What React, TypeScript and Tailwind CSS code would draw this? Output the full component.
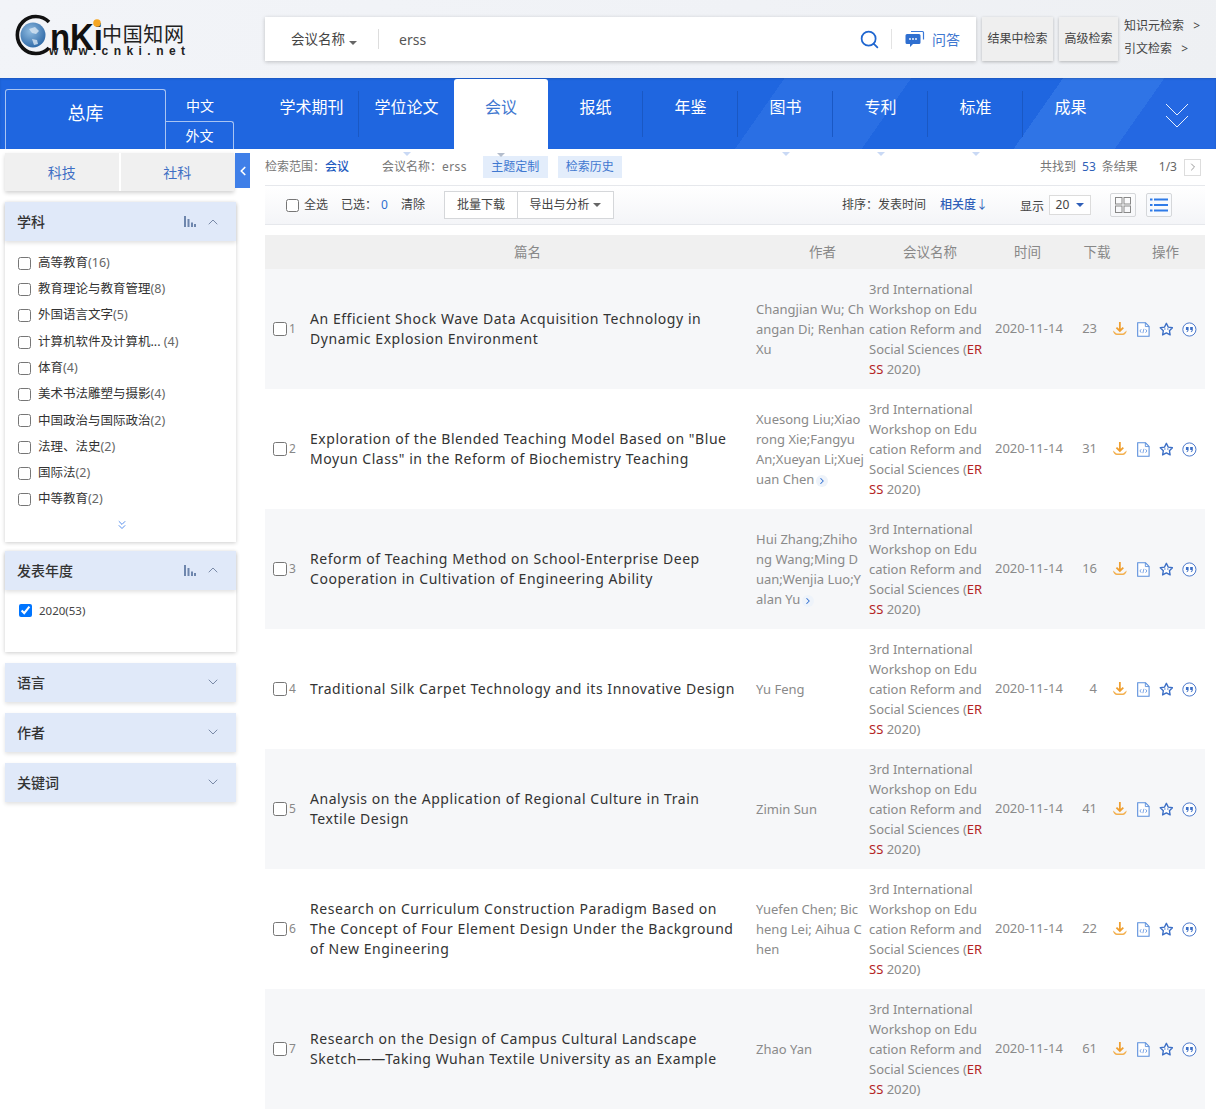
import { ChevronDown, ChevronLeft, ChevronRight, ChevronUp, ChevronsDown, Search } from "lucide-react";

type Row = {
  title: string;
  author: string;
  more?: boolean;
  downloads: number;
};

const rows: Row[] = [
  { title: "An Efficient Shock Wave Data Acquisition Technology in Dynamic Explosion Environment", author: "Changjian Wu; Changan Di; Renhan Xu", downloads: 23 },
  { title: 'Exploration of the Blended Teaching Model Based on "Blue Moyun Class" in the Reform of Biochemistry Teaching', author: "Xuesong Liu;Xiaorong Xie;Fangyu An;Xueyan Li;Xuejuan Chen", more: true, downloads: 31 },
  { title: "Reform of Teaching Method on School-Enterprise Deep Cooperation in Cultivation of Engineering Ability", author: "Hui Zhang;Zhihong Wang;Ming Duan;Wenjia Luo;Yalan Yu", more: true, downloads: 16 },
  { title: "Traditional Silk Carpet Technology and its Innovative Design", author: "Yu Feng", downloads: 4 },
  { title: "Analysis on the Application of Regional Culture in Train Textile Design", author: "Zimin Sun", downloads: 41 },
  { title: "Research on Curriculum Construction Paradigm Based on The Concept of Four Element Design Under the Background of New Engineering", author: "Yuefen Chen; Bicheng Lei; Aihua Chen", downloads: 22 },
  { title: "Research on the Design of Campus Cultural Landscape Sketch——Taking Wuhan Textile University as an Example", author: "Zhao Yan", downloads: 61 },
];

const subjects = [
  ["高等教育", "(16)"],
  ["教育理论与教育管理", "(8)"],
  ["外国语言文字", "(5)"],
  ["计算机软件及计算机...", " (4)"],
  ["体育", "(4)"],
  ["美术书法雕塑与摄影", "(4)"],
  ["中国政治与国际政治", "(2)"],
  ["法理、法史", "(2)"],
  ["国际法", "(2)"],
  ["中等教育", "(2)"],
];

const navItems = [
  { name: "学术期刊", caret: false },
  { name: "学位论文", caret: true },
  { name: "会议", caret: true, active: true },
  { name: "报纸", caret: false },
  { name: "年鉴", caret: false },
  { name: "图书", caret: true },
  { name: "专利", caret: true },
  { name: "标准", caret: true },
  { name: "成果", caret: false },
];

function Logo() {
  return (
    <svg width="180" height="50" viewBox="0 0 180 50" className="shrink-0">
      <defs>
        <radialGradient id="globe" cx="0.4" cy="0.35" r="0.8">
          <stop offset="0" stopColor="#8fbbe0" />
          <stop offset="1" stopColor="#1f5c9e" />
        </radialGradient>
      </defs>
      <circle cx="25" cy="22" r="12.5" fill="url(#globe)" />
      <path d="M21 16l6-2 4 4-3 3-4-1zM24 26l5 1 1 4-4 1z" fill="#d8e6f2" opacity="0.8" />
      <path d="M41 9A18.5 18.5 0 1 0 41 35" fill="none" stroke="#111" strokeWidth="3.6" />
      <text x="42" y="37" fontFamily="'Liberation Sans',sans-serif" fontWeight="700" fontSize="36" fill="#111" textLength="53" lengthAdjust="spacingAndGlyphs">nKi</text>
      <circle cx="89" cy="10" r="3.8" fill="#f5a623" />
      <text x="94" y="29" fontFamily="'Noto Sans CJK SC',sans-serif" fontSize="20" fill="#222" textLength="82" lengthAdjust="spacing">中国知网</text>
      <text x="41" y="42" fontFamily="'Liberation Sans',sans-serif" fontWeight="700" fontSize="12" fill="#222" textLength="136" lengthAdjust="spacing">www.cnki.net</text>
    </svg>
  );
}

function ChatIcon() {
  return (
    <svg width="20" height="18" viewBox="0 0 20 18">
      <path d="M6 1.5h11.5a1 1 0 0 1 1 1v7" fill="none" stroke="#3a78d8" strokeWidth="1.2" />
      <path d="M2 4h12a1.500 1.500 0 0 1 1.500 1.500v7a1.500 1.500 0 0 1-1.500 1.500H8l-3 3v-3H2a1.500 1.500 0 0 1-1.500-1.500v-7A1.500 1.500 0 0 1 2 4z" fill="#2f6fd0" />
      <circle cx="5" cy="9" r="0.9" fill="#fff" />
      <circle cx="8" cy="9" r="0.9" fill="#fff" />
      <circle cx="11" cy="9" r="0.9" fill="#fff" />
    </svg>
  );
}

function BarsIcon() {
  return (
    <svg width="12" height="11" viewBox="0 0 12 11" className="shrink-0">
      <path d="M0 0h2v11H0zM3.500 3h2v8h-2zM7 6.500h2V11H7zM10 8h2v3h-2z" fill="#6e86ad" />
    </svg>
  );
}

function DownloadIcon() {
  return (
    <svg width="16" height="16" viewBox="0 0 16 16">
      <path d="M8 1v9M4.500 6.500L8 10l3.500-3.500" fill="none" stroke="#ef9f2f" strokeWidth="1.800" />
      <path d="M1 9.500c.5 3 2 4.500 4 4.500h6c2 0 3.500-1.500 4-4.500l-3 2.500c-.5.500-1 .5-1.500.5h-5c-.5 0-1 0-1.500-.5z" fill="#f3b04f" />
    </svg>
  );
}

function DocIcon() {
  return (
    <svg width="13" height="15" viewBox="0 0 13 15">
      <path d="M.7.7h8l3.600 3.600v10H.7z" fill="#fff" stroke="#5a8fdc" strokeWidth="1.100" />
      <path d="M8.500.7v3.800h3.800" fill="none" stroke="#5a8fdc" strokeWidth="0.900" />
      <path d="M4.300 7.200L3 9l1.300 1.800M8.700 7.200L10 9l-1.300 1.800M7 6.800L6 11.200" fill="none" stroke="#5a8fdc" strokeWidth="0.800" />
    </svg>
  );
}

function StarIcon() {
  return (
    <svg width="15" height="15" viewBox="0 0 15 15">
      <path d="M7.500 1.200l1.900 3.900 4.300.6-3.100 3 .7 4.300-3.800-2-3.800 2 .7-4.300-3.100-3 4.300-.6z" fill="#fff" stroke="#3c6fc6" strokeWidth="1.400" strokeLinejoin="round" />
      <circle cx="6" cy="7" r="0.700" fill="#3c6fc6" />
      <circle cx="9" cy="7" r="0.700" fill="#3c6fc6" />
    </svg>
  );
}

function QuoteIcon() {
  return (
    <svg width="15" height="15" viewBox="0 0 15 15">
      <circle cx="7.500" cy="7.500" r="6.700" fill="#fff" stroke="#4a78cc" strokeWidth="1" />
      <path d="M4 5h2.700v2.500c0 1.300-.7 2.300-1.800 2.700l-.3-.7c.6-.3 1-.8 1-1.500H4zM8.300 5H11v2.500c0 1.300-.7 2.300-1.800 2.700l-.3-.7c.6-.3 1-.8 1-1.500H8.300z" fill="#3c6fc6" />
    </svg>
  );
}

function Caret({ color = "border-t-[#666]" }: { color?: string }) {
  return <span className={`inline-block h-0 w-0 border-x-[4px] border-t-[4px] border-x-transparent ${color}`} />;
}

function FilterHead({ name, open, bars }: { name: string; open?: boolean; bars?: boolean }) {
  return (
    <div className="flex h-[39px] items-center bg-[#e0e9f9] pr-[15px] pl-3 shadow-[0_2px_4px_rgba(0,0,0,0.12)]">
      <span className="flex-1 text-[14px] font-medium text-[#333]">{name}</span>
      {bars && <BarsIcon />}
      {open ? (
        <ChevronUp size={16} strokeWidth={1.500} className="ml-[9px] text-[#7a8aa8]" />
      ) : (
        <ChevronDown size={16} strokeWidth={1.500} className="ml-[9px] text-[#7a8aa8]" />
      )}
    </div>
  );
}

function Sidebar() {
  return (
    <aside className="relative ml-[5px] w-[231px] shrink-0 pt-1">
      <div className="flex h-[38px] w-[229px] gap-[2px] shadow-[0_2px_4px_rgba(0,0,0,0.18)]">
        <div className="flex flex-1 items-center justify-center bg-[#f0f0f0] text-[14px] text-[#3f6fc4]">科技</div>
        <div className="flex flex-1 items-center justify-center bg-[#f0f0f0] text-[14px] text-[#3f6fc4]">社科</div>
      </div>
      <div className="absolute top-1 left-[230px] flex h-[35px] w-[15px] items-center justify-center bg-[#3f7fe8] text-white">
        <ChevronLeft size={14} strokeWidth={3} />
      </div>

      <div className="mt-[11px] bg-white shadow-[0_1px_4px_rgba(0,0,0,0.2)]">
        <FilterHead name="学科" open bars />
        <div className="pt-[9px]">
          {subjects.map(([name, count]) => (
            <label key={name} className="flex h-[26.300px] items-center pl-[13px] text-[12.500px] text-[#333]">
              <input type="checkbox" className="m-0 h-[13px] w-[13px]" />
              <span className="ml-[7px] whitespace-pre">
                {name}
                <span className="text-[#666]">{count}</span>
              </span>
            </label>
          ))}
        </div>
        <div className="flex h-[29px] items-start justify-center pt-[5px] pl-[2px] text-[#3f7fe8]">
          <ChevronsDown size={14} strokeWidth={1.500} />
        </div>
      </div>

      <div className="mt-[9px] bg-white shadow-[0_1px_4px_rgba(0,0,0,0.2)]">
        <FilterHead name="发表年度" open bars />
        <div className="flex h-[62px] items-start pt-[14px] pl-[14px] text-[11.500px] text-[#444]">
          <input type="checkbox" defaultChecked className="m-0 h-[13px] w-[13px]" />
          <span className="ml-[7px] leading-[13px]">2020(53)</span>
        </div>
      </div>

      <div className="mt-[11px] flex flex-col gap-[11px]">
        <FilterHead name="语言" />
        <FilterHead name="作者" />
        <FilterHead name="关键词" />
      </div>
    </aside>
  );
}

function ResultRow({ row, index }: { row: Row; index: number }) {
  return (
    <div className={`flex h-[120px] items-center ${index % 2 === 0 ? "bg-[#f6f7f9]" : "bg-white"}`}>
      <div className="flex w-[45px] shrink-0 items-center pl-2 text-[12px] text-[#888]">
        <input type="checkbox" className="m-0 h-[14px] w-[14px]" />
        <span className="ml-[2px]">{index + 1}</span>
      </div>
      <div className="w-[446px] shrink-0 pr-[10px] text-[14px] leading-[20px] tracking-[0.55px] text-[#333]">{row.title}</div>
      <div className="w-[113px] shrink-0 pr-1 text-[13px] leading-[20px] break-all text-[#8a8a8a]">
        {row.author}
        {row.more && (
          <span className="ml-[2px] inline-flex h-[12px] w-[12px] items-center justify-center rounded-full bg-[#eef3fa] align-middle text-[#2f6fd0]">
            <ChevronRight size={10} strokeWidth={2.500} />
          </span>
        )}
      </div>
      <div className="w-[126px] shrink-0 pr-[12px] text-[13px] leading-[20px] break-all text-[#8a8a8a]">
        3rd International Workshop on Education Reform and Social Sciences (<span className="text-[#b52525]">ERSS</span> 2020)
      </div>
      <div className="w-[85px] shrink-0 text-[13px] text-[#8a8a8a]">2020-11-14</div>
      <div className="w-[17px] shrink-0 text-right text-[13px] text-[#8a8a8a]">{row.downloads}</div>
      <div className="ml-[15px] flex w-[85px] shrink-0 items-center gap-[9px]">
        <DownloadIcon />
        <DocIcon />
        <StarIcon />
        <QuoteIcon />
      </div>
    </div>
  );
}

export default function App() {
  return (
    <div className="min-h-[1116px] w-[1216px] overflow-hidden bg-white font-['Noto_Sans','Noto_Sans_CJK_SC',sans-serif] text-[#333]">
      <header className="flex h-[78px] items-start bg-[linear-gradient(115deg,#f2f4f8_0%,#f0f2f6_60%,#eef0f3_100%)] pt-[17px]">
        <div className="ml-[8px] -mt-[4px] w-[257px] shrink-0">
          <Logo />
        </div>
        <div className="flex h-[44px] w-[711px] items-center bg-white shadow-[0_1px_4px_rgba(0,0,0,0.22)]">
          <span className="ml-[26px] text-[13.500px] text-[#444]">会议名称</span>
          <span className="ml-[4px]"><Caret /></span>
          <span className="ml-[21px] h-[20px] w-px bg-[#ddd]" />
          <span className="ml-[20px] flex-1 text-[14px] text-[#555]">erss</span>
          <Search size={21} strokeWidth={2} className="text-[#1f66d0]" />
          <span className="mr-[13px] ml-[11px] h-[20px] w-px bg-[#e3e3e3]" />
          <ChatIcon />
          <span className="mr-[16px] ml-[7px] text-[14px] text-[#3f78d0]">问答</span>
        </div>
        <div className="ml-[6px] flex h-[44px] w-[71px] items-center justify-center bg-[#efefef] text-[12px] text-[#444] shadow-[0_1px_3px_rgba(0,0,0,0.25)]">结果中检索</div>
        <div className="ml-[6px] flex h-[44px] w-[59px] items-center justify-center bg-[#efefef] text-[12px] text-[#444] shadow-[0_1px_3px_rgba(0,0,0,0.25)]">高级检索</div>
        <div className="ml-[6px] flex flex-col gap-[5px] text-[12px] leading-[18px] text-[#444]">
          <span className="whitespace-pre">知识元检索   &gt;</span>
          <span className="whitespace-pre">引文检索   &gt;</span>
        </div>
      </header>

      <nav className="flex h-[71px] bg-[linear-gradient(125deg,#1f66e0_0%,#1f66e0_62%,#2a6fe4_62%,#2a6fe4_72%,#1f66e0_72%,#1f66e0_84%,#2f74e6_84%,#2f74e6_92%,#2468e2_92%)] shadow-[inset_0_1px_2px_rgba(0,0,0,0.15)]">
        <div className="ml-[5px] flex w-[259px] shrink-0 items-end">
          <div className="flex h-[60px] w-[161px] items-start justify-center rounded-t-[3px] border-x border-t border-[#a9c4f2] pt-[10px] text-[18px] text-white">
            总库
          </div>
          <div className="flex h-[60px] w-[68px] flex-col text-[14px] text-white">
            <div className="flex h-[32px] items-center justify-center">中文</div>
            <div className="flex h-[28px] items-center justify-center rounded-tr-[3px] border-t border-r border-[#a9c4f2]">外文</div>
          </div>
        </div>
        {navItems.map((item) => (
          <div
            key={item.name}
            className={
              item.active
                ? "relative mt-px flex w-[94px] shrink-0 flex-col items-center rounded-t-[3px] bg-white pt-[16px] text-[16px] text-[#3f78d0]"
                : "relative flex w-[95px] shrink-0 flex-col items-center pt-[17px] text-[16px] text-white"
            }
          >
            <span className="leading-[24px]">{item.name}</span>
            {item.caret && (
              <span className="absolute top-[60px]">
                <Caret color={item.active ? "border-t-[#b4bdcc]" : "border-t-[#c9d9f5]"} />
              </span>
            )}
            {!item.active && item.name !== "学位论文" && item.name !== "成果" && (
              <span className="absolute top-[13px] right-0 h-[46px] w-px bg-[#1a58c4]" />
            )}
          </div>
        ))}
        <div className="ml-[47px] flex flex-col pt-[25px] text-white">
          <svg width="24" height="26" viewBox="0 0 24 26" fill="none" stroke="#e8f0fd" strokeWidth="1">
            <path d="M1 1l11 11L23 1M1 13l11 11 11-11" />
          </svg>
        </div>
      </nav>

      <div className="flex">
        <Sidebar />
        <main className="ml-[29px] w-[940px] shrink-0">
          <div className="flex h-[36px] items-center text-[12px] text-[#777]">
            <span>检索范围：</span>
            <span className="font-medium text-[#1f5cc0]">会议</span>
            <span className="ml-[33px]">会议名称：</span>
            <span className="tracking-[0.4px]">erss</span>
            <span className="ml-[16px] flex h-[22px] w-[65px] items-center justify-center bg-[#e3edfb] text-[#3f78d0]">主题定制</span>
            <span className="ml-[10px] flex h-[22px] w-[64px] items-center justify-center bg-[#e3edfb] text-[#3f78d0]">检索历史</span>
            <span className="ml-auto">共找到</span>
            <span className="mx-[6px] text-[#2f5fb8]">53</span>
            <span>条结果</span>
            <span className="ml-[21px] text-[#666]">1/3</span>
            <span className="mr-[4px] ml-[7px] flex h-[17px] w-[17px] items-center justify-center border border-[#ddd] text-[#999]">
              <ChevronRight size={12} />
            </span>
          </div>

          <div className="flex h-[40px] items-center border-y border-[#e6e8ec] bg-[linear-gradient(180deg,#ffffff,#f4f5f8)] text-[12px] text-[#444]">
            <input type="checkbox" className="m-0 ml-[21px] h-[13px] w-[13px]" />
            <span className="ml-[5px]">全选</span>
            <span className="ml-[13px]">已选：</span>
            <span className="ml-[4px] text-[#2f6fd0]">0</span>
            <span className="ml-[13px]">清除</span>
            <span className="ml-[19px] flex h-[28px] w-[74px] items-center justify-center border border-[#d5d7da] bg-white">批量下载</span>
            <span className="flex h-[28px] w-[96px] items-center justify-center gap-1 border border-l-0 border-[#d5d7da] bg-white">
              导出与分析
              <Caret />
            </span>
            <span className="ml-[228px]">排序：发表时间</span>
            <span className="ml-[14px] font-medium text-[#2f5fb8]">相关度</span>
            <span className="text-[#2f5fb8]">↓</span>
            <span className="ml-[32px] pt-[3px]">显示</span>
            <span className="ml-[5px] flex h-[20px] w-[42px] items-center justify-center gap-[7px] border border-[#dcdcdc] bg-white">
              20
              <Caret color="border-t-[#2f5fb8]" />
            </span>
            <span className="ml-[19px] flex h-[24px] w-[26px] items-center justify-center rounded-[2px] border border-[#d5d7da]">
              <svg width="16" height="16" viewBox="0 0 16 16" fill="none" stroke="#888" strokeWidth="1">
                <rect x="0.500" y="0.500" width="6.500" height="6.500" />
                <rect x="9" y="0.500" width="6.500" height="6.500" />
                <rect x="0.500" y="9" width="6.500" height="6.500" />
                <rect x="9" y="9" width="6.500" height="6.500" />
              </svg>
            </span>
            <span className="ml-[10px] flex h-[24px] w-[26px] items-center justify-center rounded-[2px] border border-[#d5d7da] bg-[#f8fafd]">
              <svg width="18" height="14" viewBox="0 0 18 14" fill="#2f7be8">
                <rect x="0" y="0.500" width="2.500" height="2" />
                <rect x="4" y="0.500" width="14" height="2" />
                <rect x="0" y="6" width="2.500" height="2" />
                <rect x="4" y="6" width="14" height="2" />
                <rect x="0" y="11.500" width="2.500" height="2" />
                <rect x="4" y="11.500" width="14" height="2" />
              </svg>
            </span>
          </div>

          <div className="mt-[10px] flex h-[34px] items-center bg-[#f0f0f0] text-[13.500px] text-[#888]">
            <span className="w-[491px] pr-[-20px] text-center pl-[34px]">篇名</span>
            <span className="w-[113px] pl-[20px] text-center">作者</span>
            <span className="w-[126px] pr-[4px] text-center">会议名称</span>
            <span className="w-[85px] text-center pr-[20px]">时间</span>
            <span className="w-[42px] pr-[8px] text-center">下载</span>
            <span className="w-[83px] text-center pl-[4px]">操作</span>
          </div>

          {rows.map((row, i) => (
            <ResultRow key={row.title} row={row} index={i} />
          ))}
        </main>
      </div>
    </div>
  );
}
